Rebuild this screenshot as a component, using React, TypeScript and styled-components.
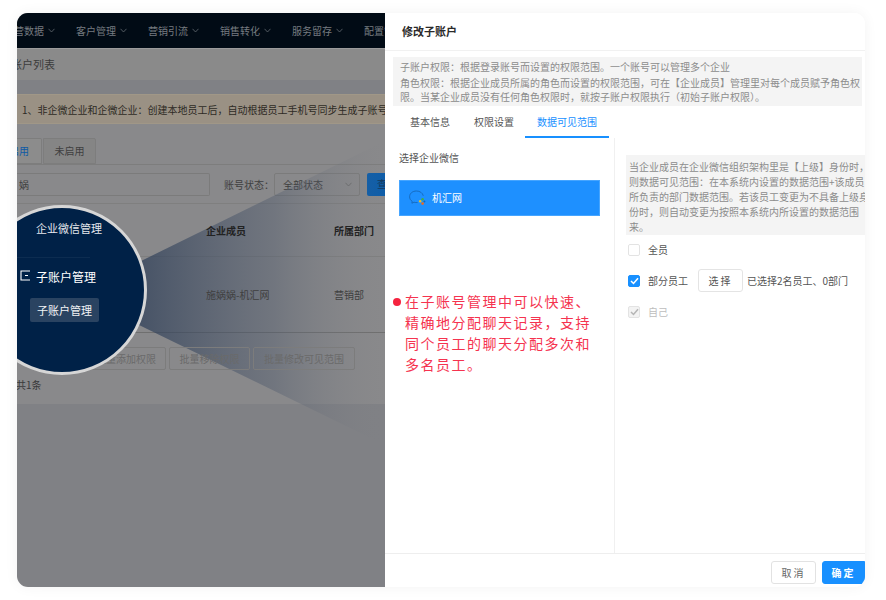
import styled, { createGlobalStyle } from 'styled-components'

const GlobalStyle = createGlobalStyle`
  html, body {
    margin: 0;
    padding: 0;
    background: #fff;
  }
  * {
    box-sizing: border-box;
  }
  body {
    font-family: "Noto Sans CJK SC", "Liberation Sans", sans-serif;
  }
`

const Frame = styled.div`
  width: 886px;
  height: 600px;
  padding: 13px 21px 13px 17px;
  background: #fff;
`
const Window = styled.div`
  position: relative;
  display: flex;
  width: 848px;
  height: 574px;
  overflow: hidden;
  border-radius: 11px;
  box-shadow: 0 0 14px rgba(0, 0, 0, 0.05);
`

/* dimmed page behind the drawer */
const Backdrop = styled.div`
  position: relative;
  width: 368px;
  flex: none;
  overflow: hidden;
  background: #808185;
  font-size: 10px;
  line-height: 14px;
  color: #3f3f3f;
`
const NavBar = styled.div`
  display: flex;
  align-items: center;
  height: 36px;
  margin-left: -13px;
  background: #010b15;
  border-bottom: 1px solid #9b9b9b;
  white-space: nowrap;
`
const NavItem = styled.div`
  display: flex;
  flex: none;
  align-items: center;
  gap: 4px;
  width: 72px;
  color: #767b80;
`
const Crumb = styled.div`
  height: 31px;
  margin-left: -17px;
  padding-top: 7px;
  background: #8a8a8a;
  font-size: 11px;
  line-height: 16px;
  color: #3c3c3c;
  white-space: nowrap;
`
const Notice = styled.div`
  height: 30px;
  margin-top: 14px;
  padding: 8px 0 0 5px;
  background: #9a9184;
  border-top: 1px solid #a09787;
  border-bottom: 1px solid #a09787;
  color: #2e2b25;
  white-space: nowrap;
`
const Sheet = styled.div`
  height: 280px;
  padding-top: 14px;
  background: #89898b;
`
const TabRow = styled.div`
  display: flex;
  gap: 1px;
  height: 27px;
  border-bottom: 1px solid #7d7d7d;
`
const PageTab = styled.div<{ $active?: boolean }>`
  display: flex;
  align-items: center;
  justify-content: ${(p) => (p.$active ? 'flex-end' : 'center')};
  width: ${(p) => (p.$active ? '25px' : '53px')};
  padding-right: ${(p) => (p.$active ? '12px' : '0')};
  background: ${(p) => (p.$active ? '#8c8c8c' : '#858585')};
  border: 1px solid #7d7d7d;
  border-left: ${(p) => (p.$active ? 'none' : '1px solid #7d7d7d')};
  border-radius: 0 2px 0 0;
  color: ${(p) => (p.$active ? '#0e5aa5' : '#3f3f3f')};
  white-space: nowrap;
`
const FilterRow = styled.div`
  display: flex;
  align-items: center;
  height: 23px;
  margin-top: 8px;
`
const SearchInput = styled.div`
  display: flex;
  flex: none;
  align-items: center;
  width: 193px;
  height: 23px;
  border: 1px solid #7b7b7b;
  border-left: none;
  border-radius: 0 2px 2px 0;
  color: #3f3f3f;
  text-indent: 2px;
`
const FilterLabel = styled.div`
  flex: none;
  width: 50px;
  margin-left: 14px;
  white-space: nowrap;
  color: #3f3f3f;
`
const SelectBox = styled.div`
  display: flex;
  flex: none;
  align-items: center;
  justify-content: space-between;
  width: 86px;
  height: 23px;
  padding: 0 7px 0 8px;
  border: 1px solid #7b7b7b;
  border-radius: 2px;
`
const QueryButton = styled.div`
  flex: none;
  width: 30px;
  height: 23px;
  margin-left: 7px;
  padding: 4px 0 0 10px;
  background: #0f5da8;
  border-radius: 2px;
  color: #15385c;
  white-space: nowrap;
`
const TableHead = styled.div`
  display: flex;
  height: 54px;
  margin-top: 7px;
  padding: 20px 0 0 189px;
  border-top: 1px solid #7f7f7f;
  border-bottom: 1px solid #7f7f7f;
  font-weight: 700;
  color: #222;
`
const TableRow = styled.div`
  display: flex;
  height: 76px;
  padding: 31px 0 0 189px;
  border-bottom: 1px solid #6f6f6f;
  color: #3f3f3f;
`
const MemberCell = styled.div`
  position: relative;
  z-index: 1;
  width: 128px;
  flex: none;
  white-space: nowrap;
`
const DeptCell = styled.div`
  position: relative;
  z-index: 1;
  white-space: nowrap;
`
const BatchRow = styled.div`
  position: relative;
  z-index: 1;
  display: flex;
  justify-content: flex-end;
  gap: 3px;
  width: 338px;
  margin-top: 14px;
`
const BatchButton = styled.div<{ $w: number }>`
  display: flex;
  align-items: center;
  justify-content: center;
  width: ${(p) => p.$w}px;
  height: 23px;
  border: 1px solid #7c7c7c;
  border-radius: 2px;
  color: #6a6a6a;
  white-space: nowrap;
`
const TotalText = styled.div`
  margin-top: 8px;
  margin-left: -1px;
  color: #3a3a3a;
`

/* magnifier sits over the page */
const Beam = styled.svg`
  position: absolute;
  left: 0;
  top: 0;
`
const Magnifier = styled.div`
  position: absolute;
  z-index: 2;
  left: -40px;
  top: 192px;
  width: 170px;
  height: 170px;
  padding: 8px 0 0 56px;
  border: 3px solid #d6d6d6;
  border-radius: 50%;
  background: #002147;
  color: #e6e9ee;
  white-space: nowrap;
`
const MagTitle = styled.div`
  margin-top: 4px;
  font-size: 11px;
  line-height: 16px;
`
const MagRule = styled.div`
  width: 110px;
  height: 1px;
  margin: 21px 0 0 -56px;
  background: #0c2c50;
`
const MagMenu = styled.div`
  position: relative;
  margin-top: 10px;
  font-size: 12px;
  line-height: 18px;
  color: #fff;
`
const MagIcon = styled.svg`
  position: absolute;
  left: -16px;
  top: 2px;
`
const MagChip = styled.div`
  width: 69px;
  height: 24px;
  margin: 12px 0 0 -6px;
  padding: 4px 0 0 7px;
  background: #2a4361;
  border-radius: 2px;
  font-size: 11px;
  line-height: 16px;
  color: #f2f4f6;
`

/* drawer */
const Drawer = styled.div`
  display: flex;
  flex-direction: column;
  width: 480px;
  flex: none;
  background: #fff;
  font-size: 10px;
  line-height: 14px;
  color: #555;
`
const DrawerHead = styled.div`
  flex: none;
  height: 38px;
  padding: 10px 0 0 17px;
  border-bottom: 1px solid #f1f1f1;
  font-size: 11px;
  line-height: 16px;
  font-weight: 700;
  color: #2a2a2a;
`
const NoteBox = styled.div`
  flex: none;
  width: 469px;
  height: 49px;
  margin: 6px 0 0 8px;
  padding: 3px 0 0 7px;
  background: #f4f4f4;
  color: #8c8c8c;
  line-height: 14.5px;
`
const NoteFirst = styled.div`
  margin-bottom: 1px;
  white-space: nowrap;
`
const DrawerTabs = styled.div`
  display: flex;
  flex: none;
  height: 32px;
  padding-left: 25px;
`
const DrawerTab = styled.div<{ $active?: boolean }>`
  margin-right: ${(p) => (p.$active ? '0' : '24px')};
  margin-left: ${(p) => (p.$active ? '-13px' : '0')};
  padding: 9px ${(p) => (p.$active ? '12px' : '0')} 0;
  border-bottom: 2px solid ${(p) => (p.$active ? '#1890ff' : 'transparent')};
  color: ${(p) => (p.$active ? '#1890ff' : '#555')};
  white-space: nowrap;
`
const Panes = styled.div`
  display: flex;
  flex: 1;
  min-height: 0;
`
const LeftPane = styled.div`
  width: 230px;
  flex: none;
  padding: 13px 0 0 14px;
  border-right: 1px solid #f0f0f0;
`
const PaneTitle = styled.div`
  color: #555;
`
const CorpRow = styled.div`
  display: flex;
  align-items: center;
  gap: 6px;
  width: 201px;
  height: 36px;
  margin-top: 15px;
  padding-left: 9px;
  background: #1e90ff;
  border: 1px solid #46a5ff;
  color: #fff;
`
const RedNote = styled.div`
  position: relative;
  width: 202px;
  margin: 75px 0 0 -6px;
  padding-left: 12px;
  font-size: 14px;
  line-height: 21px;
  letter-spacing: 1.5px;
  color: #f5334f;
`
const RedDot = styled.span`
  position: absolute;
  left: 0;
  top: 7px;
  width: 8px;
  height: 8px;
  border-radius: 50%;
  background: #f5233f;
`
const RightPane = styled.div`
  flex: 1;
  min-width: 0;
  overflow: hidden;
  padding: 17px 0 0 11px;
`
const ScopeNote = styled.div`
  height: 80px;
  padding: 4px 0 0 3px;
  background: #f4f4f4;
  color: #8c8c8c;
  line-height: 15px;
  white-space: nowrap;
  overflow: hidden;
`
const CheckRow = styled.div<{ $disabled?: boolean }>`
  display: flex;
  align-items: center;
  gap: 8px;
  height: 23px;
  margin-left: 2px;
  color: ${(p) => (p.$disabled ? '#bdbdbd' : '#555')};
`
const FirstCheckRow = styled(CheckRow)`
  margin-top: 3px;
`
const NextCheckRow = styled(CheckRow)`
  margin-top: 8px;
`
const Box = styled.span<{ $state: 'off' | 'on' | 'locked' }>`
  display: flex;
  flex: none;
  align-items: center;
  justify-content: center;
  width: 12px;
  height: 12px;
  border-radius: 2px;
  border: 1px solid ${(p) => (p.$state === 'on' ? '#1890ff' : '#e3e3e3')};
  background: ${(p) => (p.$state === 'on' ? '#1890ff' : p.$state === 'locked' ? '#f3f3f3' : '#fff')};
`
const PickButton = styled.div`
  display: flex;
  flex: none;
  align-items: center;
  justify-content: center;
  width: 45px;
  height: 23px;
  margin-left: 2px;
  border: 1px solid #e4e4e4;
  border-radius: 3px;
  letter-spacing: 2px;
  color: #555;
`
const PickedText = styled.div`
  margin-left: -4px;
  white-space: nowrap;
`
const Footer = styled.div`
  display: flex;
  flex: none;
  justify-content: flex-end;
  gap: 6px;
  height: 34px;
  padding-top: 7px;
  border-top: 1px solid #eeeeee;
`
const FootButton = styled.div<{ $primary?: boolean; $w: number }>`
  display: flex;
  align-items: center;
  justify-content: center;
  width: ${(p) => p.$w}px;
  height: 23px;
  border: 1px solid ${(p) => (p.$primary ? '#1890ff' : '#e2e2e2')};
  border-radius: ${(p) => (p.$primary ? '3px 0 0 3px' : '3px')};
  background: ${(p) => (p.$primary ? '#1890ff' : '#fff')};
  color: ${(p) => (p.$primary ? '#fff' : '#666')};
  font-weight: ${(p) => (p.$primary ? 700 : 400)};
  letter-spacing: 2px;
`

const Chevron = ({ color }: { color: string }) => (
  <svg width="7" height="5" viewBox="0 0 7 5" fill="none">
    <path d="M0.5 0.8 L3.5 4 L6.5 0.8" stroke={color} strokeWidth="0.8" />
  </svg>
)

const Tick = ({ color }: { color: string }) => (
  <svg width="9" height="8" viewBox="0 0 9 8" fill="none">
    <path d="M1 4 L3.5 6.5 L8 1.2" stroke={color} strokeWidth="1.5" />
  </svg>
)

const WeComIcon = () => (
  <svg width="17" height="16" viewBox="0 0 17 16" fill="none">
    <path
      d="M7.5 1 C3.4 1 0.6 3.5 0.6 6.8 C0.6 8.8 1.6 10.3 3.2 11.4 L2.9 13.2 L5 12.2 C6.2 12.6 7.4 12.7 8.6 12.5"
      stroke="#1668b8"
      strokeWidth="0.9"
    />
    <path d="M7.5 1 C10.9 1 13.6 2.9 14.3 5.8" stroke="#1668b8" strokeWidth="0.9" />
    <circle cx="13.6" cy="9.2" r="1.2" fill="#3fae4a" />
    <circle cx="11.2" cy="11.2" r="1.2" fill="#f2c21a" />
    <circle cx="15.4" cy="11.4" r="1" fill="#1668b8" />
    <circle cx="13.6" cy="13.6" r="1.3" fill="#ee6a1f" />
  </svg>
)

const navItems = ['运营数据', '客户管理', '营销引流', '销售转化', '服务留存', '配置管理']

export default function App() {
  return (
    <Frame>
      <GlobalStyle />
      <Window>
        <Backdrop>
          <NavBar>
            {navItems.map((n) => (
              <NavItem key={n}>
                {n}
                <Chevron color="#666c72" />
              </NavItem>
            ))}
          </NavBar>
          <Crumb>子账户列表</Crumb>
          <Notice>1、非企微企业和企微企业：创建本地员工后，自动根据员工手机号同步生成子账号</Notice>
          <Sheet>
            <TabRow>
              <PageTab $active>已启用</PageTab>
              <PageTab>未启用</PageTab>
            </TabRow>
            <FilterRow>
              <SearchInput>娲</SearchInput>
              <FilterLabel>账号状态：</FilterLabel>
              <SelectBox>
                全部状态
                <Chevron color="#666" />
              </SelectBox>
              <QueryButton>查询</QueryButton>
            </FilterRow>
            <TableHead>
              <MemberCell>企业成员</MemberCell>
              <DeptCell>所属部门</DeptCell>
            </TableHead>
            <TableRow>
              <MemberCell>施娲娲-机汇网</MemberCell>
              <DeptCell>营销部</DeptCell>
            </TableRow>
            <BatchRow>
              <BatchButton $w={80}>批量添加权限</BatchButton>
              <BatchButton $w={81}>批量移除权限</BatchButton>
              <BatchButton $w={102}>批量修改可见范围</BatchButton>
            </BatchRow>
            <TotalText>共1条</TotalText>
          </Sheet>
          <Beam width="368" height="574" viewBox="0 0 368 574">
            <defs>
              <linearGradient id="beamFade" x1="0" y1="0" x2="1" y2="0">
                <stop offset="0" stopColor="#2d3e58" stopOpacity="0.72" />
                <stop offset="0.55" stopColor="#4a566a" stopOpacity="0.38" />
                <stop offset="1" stopColor="#808185" stopOpacity="0" />
              </linearGradient>
            </defs>
            <polygon points="122,249 368,128 368,432 122,312" fill="url(#beamFade)" />
          </Beam>
          <Magnifier>
            <MagTitle>企业微信管理</MagTitle>
            <MagRule />
            <MagMenu>
              <MagIcon width="11" height="11" viewBox="0 0 11 11" fill="none">
                <path d="M10 1 H1 V10 H10 M5 5.5 H8" stroke="#fff" strokeWidth="1.1" />
              </MagIcon>
              子账户管理
            </MagMenu>
            <MagChip>子账户管理</MagChip>
          </Magnifier>
        </Backdrop>
        <Drawer>
          <DrawerHead>修改子账户</DrawerHead>
          <NoteBox>
            <NoteFirst>子账户权限：根据登录账号而设置的权限范围。一个账号可以管理多个企业</NoteFirst>
            角色权限：根据企业成员所属的角色而设置的权限范围，可在【企业成员】管理里对每个成员赋予角色权限。当某企业成员没有任何角色权限时，就按子账户权限执行（初始子账户权限）。
          </NoteBox>
          <DrawerTabs>
            <DrawerTab>基本信息</DrawerTab>
            <DrawerTab>权限设置</DrawerTab>
            <DrawerTab $active>数据可见范围</DrawerTab>
          </DrawerTabs>
          <Panes>
            <LeftPane>
              <PaneTitle>选择企业微信</PaneTitle>
              <CorpRow>
                <WeComIcon />
                机汇网
              </CorpRow>
              <RedNote>
                <RedDot />
                在子账号管理中可以快速、精确地分配聊天记录，支持同个员工的聊天分配多次和多名员工。
              </RedNote>
            </LeftPane>
            <RightPane>
              <ScopeNote>
                当企业成员在企业微信组织架构里是【上级】身份时，
                <br />
                则数据可见范围：在本系统内设置的数据范围+该成员
                <br />
                所负责的部门数据范围。若该员工变更为不具备上级身
                <br />
                份时，则自动变更为按照本系统内所设置的数据范围
                <br />
                来。
              </ScopeNote>
              <FirstCheckRow>
                <Box $state="off" />
                全员
              </FirstCheckRow>
              <NextCheckRow>
                <Box $state="on">
                  <Tick color="#fff" />
                </Box>
                部分员工
                <PickButton>选择</PickButton>
                <PickedText>已选择2名员工、0部门</PickedText>
              </NextCheckRow>
              <NextCheckRow $disabled>
                <Box $state="locked">
                  <Tick color="#b5b5b5" />
                </Box>
                自己
              </NextCheckRow>
            </RightPane>
          </Panes>
          <Footer>
            <FootButton $w={45}>取消</FootButton>
            <FootButton $primary $w={43}>
              确定
            </FootButton>
          </Footer>
        </Drawer>
      </Window>
    </Frame>
  )
}
